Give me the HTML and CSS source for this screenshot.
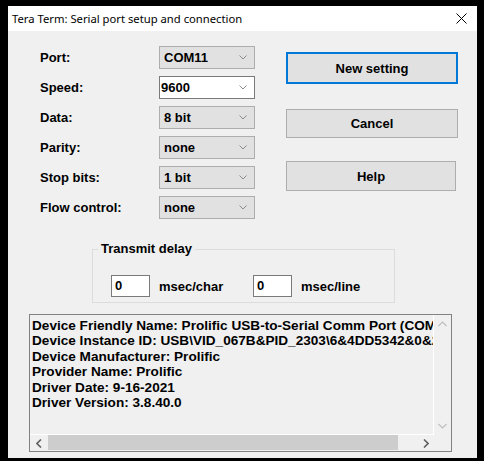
FILE: index.html
```html
<!DOCTYPE html>
<html>
<head>
<meta charset="utf-8">
<link rel="stylesheet" href="styles.css">
</head>
<body>
<div class="window">
  <div class="titlebar">
    <span class="title">Tera Term: Serial port setup and connection</span>
    <svg class="close" width="11" height="11" viewBox="0 0 11 11"><path d="M0.5 0.5 L10.5 10.5 M10.5 0.5 L0.5 10.5" stroke="#000" stroke-width="1" fill="none"/></svg>
  </div>
  <div class="client">
    <div class="top">
      <div class="form">
        <span class="label">Port:</span>
        <div class="combo"><span>COM11</span><svg class="chev" width="8" height="5" viewBox="0 0 8 5"><polyline points="0.5,0.5 4,4 7.5,0.5" fill="none" stroke="#8a8a8a" stroke-width="1"/></svg></div>
        <span class="label">Speed:</span>
        <div class="combo edit"><span>9600</span><svg class="chev" width="8" height="5" viewBox="0 0 8 5"><polyline points="0.5,0.5 4,4 7.5,0.5" fill="none" stroke="#8a8a8a" stroke-width="1"/></svg></div>
        <span class="label">Data:</span>
        <div class="combo"><span>8 bit</span><svg class="chev" width="8" height="5" viewBox="0 0 8 5"><polyline points="0.5,0.5 4,4 7.5,0.5" fill="none" stroke="#8a8a8a" stroke-width="1"/></svg></div>
        <span class="label">Parity:</span>
        <div class="combo"><span>none</span><svg class="chev" width="8" height="5" viewBox="0 0 8 5"><polyline points="0.5,0.5 4,4 7.5,0.5" fill="none" stroke="#8a8a8a" stroke-width="1"/></svg></div>
        <span class="label">Stop bits:</span>
        <div class="combo"><span>1 bit</span><svg class="chev" width="8" height="5" viewBox="0 0 8 5"><polyline points="0.5,0.5 4,4 7.5,0.5" fill="none" stroke="#8a8a8a" stroke-width="1"/></svg></div>
        <span class="label">Flow control:</span>
        <div class="combo"><span>none</span><svg class="chev" width="8" height="5" viewBox="0 0 8 5"><polyline points="0.5,0.5 4,4 7.5,0.5" fill="none" stroke="#8a8a8a" stroke-width="1"/></svg></div>
      </div>
      <div class="buttons">
        <div class="btn btn-default">New setting</div>
        <div class="btn btn-cancel">Cancel</div>
        <div class="btn btn-help">Help</div>
      </div>
    </div>
    <div class="group">
      <span class="group-title">Transmit delay</span>
      <div class="delay-row">
        <div class="field">0</div>
        <span class="delay-label first">msec/char</span>
        <div class="field">0</div>
        <span class="delay-label">msec/line</span>
      </div>
    </div>
    <div class="listbox">
      <div class="list-text">
        <div>Device Friendly Name: Prolific USB-to-Serial Comm Port (COM11)</div>
        <div>Device Instance ID: USB\VID_067B&amp;PID_2303\6&amp;4DD5342&amp;0&amp;2</div>
        <div>Device Manufacturer: Prolific</div>
        <div>Provider Name: Prolific</div>
        <div>Driver Date: 9-16-2021</div>
        <div>Driver Version: 3.8.40.0</div>
      </div>
      <div class="vscroll">
        <svg width="9" height="6" viewBox="0 0 9 6"><polyline points="0.5,5 4.5,1 8.5,5" fill="none" stroke="#bfbfbf" stroke-width="1.2"/></svg>
        <svg width="9" height="6" viewBox="0 0 9 6"><polyline points="0.5,1 4.5,5 8.5,1" fill="none" stroke="#bfbfbf" stroke-width="1.2"/></svg>
      </div>
      <div class="hscroll">
        <div class="harrow"><svg width="6" height="9" viewBox="0 0 6 9"><polyline points="5,0.5 1,4.5 5,8.5" fill="none" stroke="#606060" stroke-width="1.6"/></svg></div>
        <div class="thumb"></div>
        <div class="harrow right"><svg width="6" height="9" viewBox="0 0 6 9"><polyline points="1,0.5 5,4.5 1,8.5" fill="none" stroke="#606060" stroke-width="1.6"/></svg></div>
      </div>
      <div class="corner"></div>
    </div>
  </div>
</div>
</body>
</html>
```
FILE: styles.css
```css
html, body {
  margin: 0;
  padding: 0;
  background: #000;
  width: 484px;
  height: 461px;
  overflow: hidden;
}

.window {
  width: 469px;
  height: 452px;
  margin: 6px 0 0 8px;
  background: #f0f0f0;
  display: flex;
  flex-direction: column;
  font-family: "Liberation Sans", Arial, sans-serif;
  font-weight: bold;
  font-size: 13px;
  color: #000;
}

.titlebar {
  height: 25px;
  background: #fff;
  display: flex;
  align-items: center;
  justify-content: space-between;
  padding: 0 10px 0 4px;
  flex: none;
}

.title {
  font-family: "Noto Sans", "Open Sans", sans-serif;
  font-weight: normal;
  font-size: 11.25px;
  color: #000;
}

.client {
  flex: 1;
  display: flex;
  flex-direction: column;
}

.top {
  display: flex;
  margin-left: 32px;
  padding-top: 15px;
}

.form {
  display: grid;
  grid-template-columns: 119px 96px;
  grid-auto-rows: 23px;
  row-gap: 7px;
  align-items: center;
}

.label {
  line-height: 15px;
}

.combo {
  height: 23px;
  box-sizing: border-box;
  border: 1px solid #adadad;
  background: #e1e1e1;
  display: flex;
  align-items: center;
  padding: 0 7px 0 4px;
}

.combo.edit {
  background: #fff;
  border-color: #7a7a7a;
  padding-left: 1px;
}

.combo .chev {
  margin-left: auto;
}

.buttons {
  margin-left: 31px;
  display: flex;
  flex-direction: column;
}

.btn {
  box-sizing: border-box;
  width: 172px;
  background: #e1e1e1;
  border: 1px solid #adadad;
  display: flex;
  align-items: center;
  justify-content: center;
}

.btn-default {
  margin-top: 6px;
  height: 32px;
  border: 2px solid #0078d7;
}

.btn-cancel {
  margin-top: 25px;
  height: 29px;
}

.btn-help {
  margin-top: 23px;
  height: 30px;
  width: 170px;
}

.group {
  margin: 30px 0 0 84px;
  width: 303px;
  height: 54px;
  box-sizing: border-box;
  border: 1px solid #dcdcdc;
}

.group-title {
  display: inline-block;
  margin: -9px 0 0 5px;
  padding: 0 3px;
  background: #f0f0f0;
  line-height: 15px;
  vertical-align: top;
}

.delay-row {
  display: flex;
  align-items: center;
  margin: 10px 0 0 18px;
}

.field {
  width: 39px;
  height: 22px;
  box-sizing: border-box;
  border: 1px solid #7a7a7a;
  background: #fff;
  padding-left: 3px;
  line-height: 20px;
}

.delay-label {
  margin-left: 9px;
}

.delay-label.first {
  width: 94px;
}

.listbox {
  margin: 11px 0 0 21px;
  width: 423px;
  height: 138px;
  box-sizing: border-box;
  border: 1px solid #828282;
  display: grid;
  grid-template-columns: 404px 17px;
  grid-template-rows: 120px 16px;
  background: #f0f0f0;
}

.list-text {
  overflow: hidden;
  white-space: nowrap;
  padding: 3px 0 0 2px;
  font-size: 13.6px;
  line-height: 15.4px;
  border-right: 1px solid #fff;
  border-bottom: 1px solid #fff;
}

.vscroll {
  display: flex;
  flex-direction: column;
  justify-content: space-between;
  align-items: center;
  padding: 6px 0 6px 0;
}

.hscroll {
  display: flex;
  align-items: stretch;
  padding: 0;
}

.harrow {
  width: 17px;
  display: flex;
  align-items: center;
  justify-content: center;
}

.harrow.right {
  margin-left: auto;
}

.thumb {
  width: 350px;
  background: #cdcdcd;
  margin: 0 0 1px 1px;
}

.corner {
  background: #f0f0f0;
}
```
